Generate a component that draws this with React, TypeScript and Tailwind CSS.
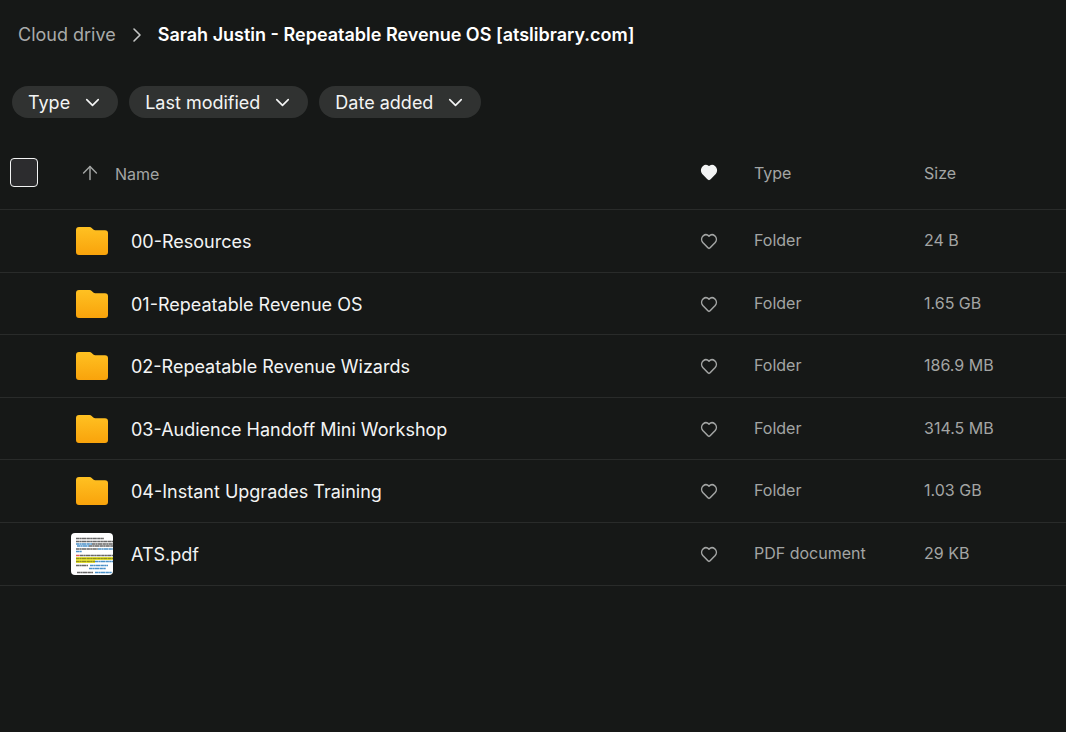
import { ArrowUp, ChevronDown, ChevronRight } from "lucide-react";
import { clsx } from "clsx";

type Entry = {
  name: string;
  kind: "folder" | "pdf";
  type: string;
  size: string;
};

const filters = ["Type", "Last modified", "Date added"];

const entries: Entry[] = [
  { name: "00-Resources", kind: "folder", type: "Folder", size: "24 B" },
  { name: "01-Repeatable Revenue OS", kind: "folder", type: "Folder", size: "1.65 GB" },
  { name: "02-Repeatable Revenue Wizards", kind: "folder", type: "Folder", size: "186.9 MB" },
  { name: "03-Audience Handoff Mini Workshop", kind: "folder", type: "Folder", size: "314.5 MB" },
  { name: "04-Instant Upgrades Training", kind: "folder", type: "Folder", size: "1.03 GB" },
  { name: "ATS.pdf", kind: "pdf", type: "PDF document", size: "29 KB" }
];

function HeartIcon({ filled = false }: { filled?: boolean }) {
  return (
    <svg
      viewBox="0 0 18 18"
      className={clsx("h-[18px] w-[18px]", filled ? "text-[#f3f4f4]" : "text-[#a3a5a4]")}
      fill={filled ? "currentColor" : "none"}
      stroke="currentColor"
      strokeWidth="1.5"
      strokeLinejoin="round"
      aria-hidden="true"
    >
      <path d="M9 3.1C7.4 1.500 4.900 1.400 3.200 2.800 1.300 4.500 1.100 7.400 2.800 9.500L7.900 14.800C8.500 15.400 9.500 15.400 10.100 14.800L15.200 9.500C16.900 7.400 16.700 4.500 14.800 2.800 13.100 1.400 10.600 1.500 9 3.100Z" />
    </svg>
  );
}

function FolderIcon() {
  return (
    <svg viewBox="0 0 32 28" className="h-7 w-8" aria-hidden="true">
      <defs>
        <linearGradient id="folder-fill" x1="0" y1="0" x2="0" y2="1">
          <stop offset="0" stopColor="#ffc122" />
          <stop offset="1" stopColor="#f9a30b" />
        </linearGradient>
      </defs>
      <path
        fill="url(#folder-fill)"
        d="M3 0H13.500C14.400 0 15.100.3 15.700.9L17.300 2.400C17.800 2.900 18.500 3.200 19.200 3.200H29A3 3 0 0 1 32 6.200V25A3 3 0 0 1 29 28H3A3 3 0 0 1 0 25V3A3 3 0 0 1 3 0Z"
      />
    </svg>
  );
}

function PdfThumbnail() {
  return (
    <svg viewBox="0 0 42 42" className="h-[42px] w-[42px] rounded-sm bg-white" aria-hidden="true">
      <path fill="#f4f03a" d="M5 24h37v3H5zM5 27h19v3H5z" />
      <g fill="none" strokeWidth="1.3" strokeDasharray="3.3 .3 2.1 .3 4.2 .4">
        <path stroke="#666" d="M5 5.500h28M5 8.500h37M21 11h21M18 13h24M5 16h22M9 22.500h33M5 32.500h12M6 39.500h16" />
        <path stroke="#4a90c8" d="M5 11h16M6 13h12M27 16h15M5 18.500h6M24 28.500h18M19 32.500h18M18 35.500h17M24 39.500h17" />
        <path stroke="#8f8e1c" d="M5 25.500h37M5 28.500h19" />
        <path stroke="#e05a5a" d="M5 22.500h4" />
      </g>
    </svg>
  );
}

function Breadcrumb() {
  return (
    <nav aria-label="Breadcrumb" className="flex h-[70px] items-center px-[18px] text-lg">
      <a href="#cloud-drive" className="text-[#a9abaa]">
        Cloud drive
      </a>
      <ChevronRight className="mx-[9px] h-6 w-6 shrink-0 text-[#c4c6c5]" strokeWidth={1.6} />
      <span aria-current="page" className="truncate font-semibold text-white">
        Sarah Justin - Repeatable Revenue OS [atslibrary.com]
      </span>
    </nav>
  );
}

function FileRow({ entry }: { entry: Entry }) {
  return (
    <tr className="h-[63px] not-last:even:h-[62px] [&>td]:border-b [&>td]:border-[#292b2a]">
      <td />
      <td>
        <div className="flex items-center gap-[18px]">
          <span className="flex w-[42px] shrink-0 justify-center">
            {entry.kind === "folder" ? <FolderIcon /> : <PdfThumbnail />}
          </span>
          <a href={`#${entry.name}`} className="truncate pt-[2px] text-lg text-[#f3f4f4]">
            {entry.name}
          </a>
        </div>
      </td>
      <td className="pt-[2px]">
        <button type="button" aria-label={`Add ${entry.name} to favourites`} className="mx-auto block">
          <HeartIcon />
        </button>
      </td>
      <td className="pb-[2px]">{entry.type}</td>
      <td className="pb-[2px]">{entry.size}</td>
    </tr>
  );
}

export default function App() {
  return (
    <main className="min-h-screen bg-[#161817] font-['Inter',sans-serif] text-[#a3a5a4]">
      <Breadcrumb />
      <div className="flex flex-wrap gap-[11px] px-3 pt-4">
        {filters.map((label) => (
          <button
            key={label}
            type="button"
            className="flex h-8 items-center gap-[11px] rounded-full bg-[#303231] pr-[14px] pl-4 text-lg text-[#f3f4f4]"
          >
            <span className="pt-[2px]">{label}</span>
            <ChevronDown className="h-[23px] w-[23px]" strokeWidth={1.7} />
          </button>
        ))}
      </div>
      <table className="mt-[18px] w-full table-fixed border-separate border-spacing-0 text-left text-base">
        <colgroup>
          <col className="w-[71px]" />
          <col />
          <col className="w-[90px]" />
          <col className="w-[170px]" />
          <col className="w-[142px]" />
        </colgroup>
        <thead>
          <tr className="h-[74px] [&>th]:border-b [&>th]:border-[#292b2a] [&>th]:font-normal">
            <th>
              <input
                type="checkbox"
                aria-label="Select all"
                className="ml-[10px] block h-[29px] w-7 appearance-none rounded-sm border border-[#f3f4f4] bg-[#2c2c2e] checked:bg-[#f3f4f4]"
              />
            </th>
            <th aria-sort="ascending">
              <button type="button" className="ml-2 flex items-center gap-[14px]">
                <ArrowUp className="h-[22px] w-[22px]" strokeWidth={1.6} />
                <span className="pt-[2px]">Name</span>
              </button>
            </th>
            <th>
              <button type="button" aria-label="Sort by favourites" className="mx-auto block">
                <HeartIcon filled />
              </button>
            </th>
            <th>
              <button type="button">Type</button>
            </th>
            <th>
              <button type="button">Size</button>
            </th>
          </tr>
        </thead>
        <tbody>
          {entries.map((entry) => (
            <FileRow key={entry.name} entry={entry} />
          ))}
        </tbody>
      </table>
    </main>
  );
}
